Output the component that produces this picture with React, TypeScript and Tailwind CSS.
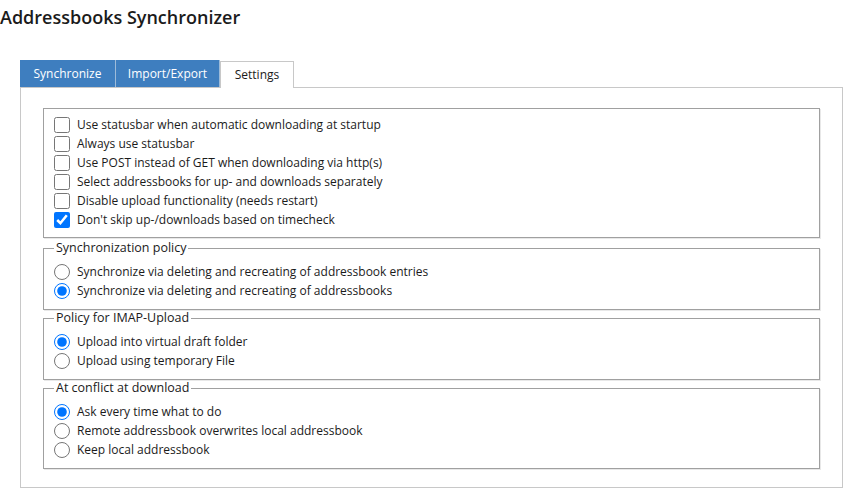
import React, { useState } from 'react';

const checkOptions = [
  'Use statusbar when automatic downloading at startup',
  'Always use statusbar',
  'Use POST instead of GET when downloading via http(s)',
  'Select addressbooks for up- and downloads separately',
  'Disable upload functionality (needs restart)',
  "Don't skip up-/downloads based on timecheck",
];

const radioGroups = [
  {
    name: 'sync',
    title: 'Synchronization policy',
    options: [
      'Synchronize via deleting and recreating of addressbook entries',
      'Synchronize via deleting and recreating of addressbooks',
    ],
    initial: 1,
  },
  {
    name: 'imap',
    title: 'Policy for IMAP-Upload',
    options: ['Upload into virtual draft folder', 'Upload using temporary File'],
    initial: 0,
  },
  {
    name: 'conflict',
    title: 'At conflict at download',
    options: [
      'Ask every time what to do',
      'Remote addressbook overwrites local addressbook',
      'Keep local addressbook',
    ],
    initial: 0,
  },
];

const RadioGroup = ({ group }: { group: (typeof radioGroups)[number] }) => {
  const [value, setValue] = useState(group.initial);
  return (
    <fieldset className="border border-[#a0a0a0] px-[10px] pt-[6px] pb-[9px] shadow-[1px_1px_0_#e8e8e8]">
      <legend className="px-[2px] leading-[16px] text-[12.5px]">{group.title}</legend>
      {group.options.map((opt, i) => (
        <label key={opt} className="flex items-center gap-[7px] h-[19px]">
          <input
            type="radio"
            name={group.name}
            checked={value === i}
            onChange={() => setValue(i)}
            className="w-4 h-4 m-0"
          />
          <span>{opt}</span>
        </label>
      ))}
    </fieldset>
  );
};

const App: React.FC = () => {
  const [checks, setChecks] = useState([false, false, false, false, false, true]);
  const tabs = ['Synchronize', 'Import/Export', 'Settings'];

  return (
    <div
      className="w-[846px] h-[494px] bg-white text-[#1b1b1b] text-[12px] overflow-hidden"
      style={{ fontFamily: '"Segoe UI", "Open Sans", "Noto Sans", sans-serif' }}
    >
      <h1 className="text-[18px] font-semibold leading-[26px] pt-[4px]">Addressbooks Synchronizer</h1>

      <div className="ml-[20px] mt-[30px] w-[823px]">
        <div className="flex h-[27px]">
          {tabs.map(t =>
            t === 'Settings' ? (
              <div
                key={t}
                className="w-[74px] border border-b-0 border-[#c8c8c8] bg-white flex items-center justify-center relative top-px h-[27px]"
              >
                {t}
              </div>
            ) : (
              <div
                key={t}
                className={`bg-[#3e7ebf] text-white flex items-center justify-center border-r border-[#9dbbd9] ${
                  t === 'Synchronize' ? 'w-[96px]' : 'w-[104px]'
                }`}
              >
                {t}
              </div>
            )
          )}
        </div>

        <div className="border border-[#c8c8c8] h-[401px] px-[22px] pt-[20px] flex flex-col">
          <div className="border border-[#a0a0a0] px-[10px] pt-[6px] pb-[8px] mb-[2px] shadow-[1px_1px_0_#e8e8e8]">
            {checkOptions.map((opt, i) => (
              <label key={opt} className="flex items-center gap-[7px] h-[19px]">
                <input
                  type="checkbox"
                  checked={checks[i]}
                  onChange={() => setChecks(c => c.map((v, j) => (j === i ? !v : v)))}
                  className="w-4 h-4 m-0"
                />
                <span>{opt}</span>
              </label>
            ))}
          </div>
          {radioGroups.map(g => (
            <RadioGroup key={g.name} group={g} />
          ))}
        </div>
      </div>
    </div>
  );
};

export default App;
